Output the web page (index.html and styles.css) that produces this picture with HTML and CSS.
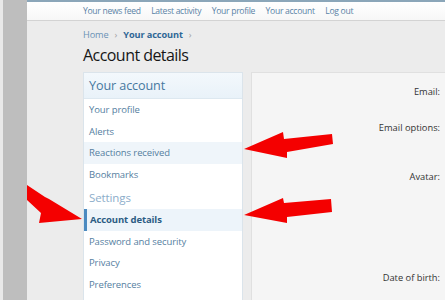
FILE: index.html
```html
<!DOCTYPE html>
<html>
<head>
<meta charset="utf-8">
<link rel="stylesheet" href="styles.css">
</head>
<body>
<div class="strip"></div>
<div class="page">
  <div class="topline"></div>
  <nav class="nav">
    <a>Your news feed</a>
    <a>Latest activity</a>
    <a>Your profile</a>
    <a>Your account</a>
    <a>Log out</a>
  </nav>
  <main class="main">
    <div class="crumbs"><span class="crumb">Home</span><span class="sep">›</span><span class="crumb cur">Your account</span><span class="sep">›</span></div>
    <h1 class="title">Account details</h1>
    <div class="cols">
      <aside class="side">
        <div class="side-head">Your account</div>
        <div class="item">Your profile</div>
        <div class="item">Alerts</div>
        <div class="item hover">Reactions received</div>
        <div class="item">Bookmarks</div>
        <div class="side-sub">Settings</div>
        <div class="item active">Account details</div>
        <div class="item">Password and security</div>
        <div class="item">Privacy</div>
        <div class="item">Preferences</div>
      </aside>
      <section class="panel">
        <div class="row r1"><span class="lbl">Email:</span></div>
        <div class="row r2"><span class="lbl">Email options:</span></div>
        <div class="row r3"><span class="lbl">Avatar:</span></div>
        <div class="row r4"><span class="lbl">Date of birth:</span></div>
      </section>
    </div>
  </main>
</div>
<svg class="arrows" width="445" height="300" viewBox="0 0 445 300">
  <polygon fill="#f40000" points="332,134 333,144 287,152 287,158 244,149 283,132 284,139"/>
  <polygon fill="#f40000" points="331,199 332,212 287,217 287,223 244,215 283,198 284,203"/>
  <polygon fill="#f40000" points="27,185 45,197 49,199 82,219 39,223 41,213 27,200"/>
</svg>
</body>
</html>
```
FILE: styles.css
```css
html, body {
  margin: 0;
  padding: 0;
  height: 100%;
  overflow: hidden;
}
body {
  display: flex;
  font-family: "Open Sans", "Noto Sans", sans-serif;
  background: #ececec;
  position: relative;
}
.strip {
  width: 24px;
  flex: none;
  background: #bebebe;
  border-left: 3px solid #e9e9e9;
}
.page {
  flex: 1;
  min-width: 0;
  display: flex;
  flex-direction: column;
  background: #ececec;
}
.topline {
  height: 2px;
  background: #8ba6b9;
}
.nav {
  height: 18px;
  background: linear-gradient(#ffffff, #f7f7f7);
  border-bottom: 1px solid #d3d3d3;
  display: flex;
  align-items: center;
  gap: 10.5px;
  padding-left: 56px;
  font-size: 8.6px;
  letter-spacing: -0.3px;
}
.nav a {
  color: #5a83a6;
}
.main {
  padding-left: 56px;
  flex: 1;
  display: flex;
  flex-direction: column;
}
.crumbs {
  margin-top: 7px;
  height: 13px;
  line-height: 13px;
  font-size: 9.2px;
  letter-spacing: -0.1px;
  display: flex;
  gap: 6px;
}
.crumb { color: #6a92b6; }
.crumb.cur { color: #2f6796; font-weight: bold; }
.sep { color: #a0a0a0; }
.title {
  margin: 3px 0 0;
  font-size: 16px;
  font-weight: normal;
  color: #161616;
  line-height: 22px;
  height: 22px;
  letter-spacing: -0.55px;
}
.cols {
  margin-top: 6px;
  display: flex;
  gap: 8px;
  flex: 1;
}
.side {
  width: 158px;
  flex: none;
  background: #ffffff;
  border: 1px solid #dbe4eb;
  border-bottom: none;
  font-size: 9.5px;
  letter-spacing: -0.1px;
}
.side-head {
  height: 25px;
  line-height: 25px;
  padding-left: 5px;
  font-size: 12.6px;
  color: #47789f;
  background: linear-gradient(#f3f8fc, #e9f2f9);
  border-bottom: 1px solid #dde8f0;
}
.item {
  height: 21.5px;
  line-height: 21.5px;
  padding-left: 5px;
  color: #55809f;
}
.item.hover {
  background: #eff5fa;
}
.item.active {
  background: #edf4fa;
  border-left: 3px solid #4b8ac0;
  padding-left: 3px;
  color: #2c5c84;
  font-weight: bold;
}
.side-sub {
  height: 24px;
  line-height: 25px;
  padding-left: 5px;
  font-size: 11.5px;
  color: #8cadca;
}
.panel {
  flex: 1;
  background: #f5f5f5;
  border: 1px solid #e0e0e0;
  border-right: none;
  border-bottom: none;
  font-size: 9.3px;
  color: #333333;
  display: flex;
  flex-direction: column;
  width: 200px;
}
.row {
  width: 188px;
  text-align: right;
  line-height: 12px;
}
.r1 { padding-top: 13px; height: 23px; }
.r2 { padding-top: 13px; height: 36px; }
.r3 { padding-top: 13px; height: 87px; }
.r4 { padding-top: 14px; }
.arrows {
  position: absolute;
  left: 0;
  top: 0;
  pointer-events: none;
}
```
